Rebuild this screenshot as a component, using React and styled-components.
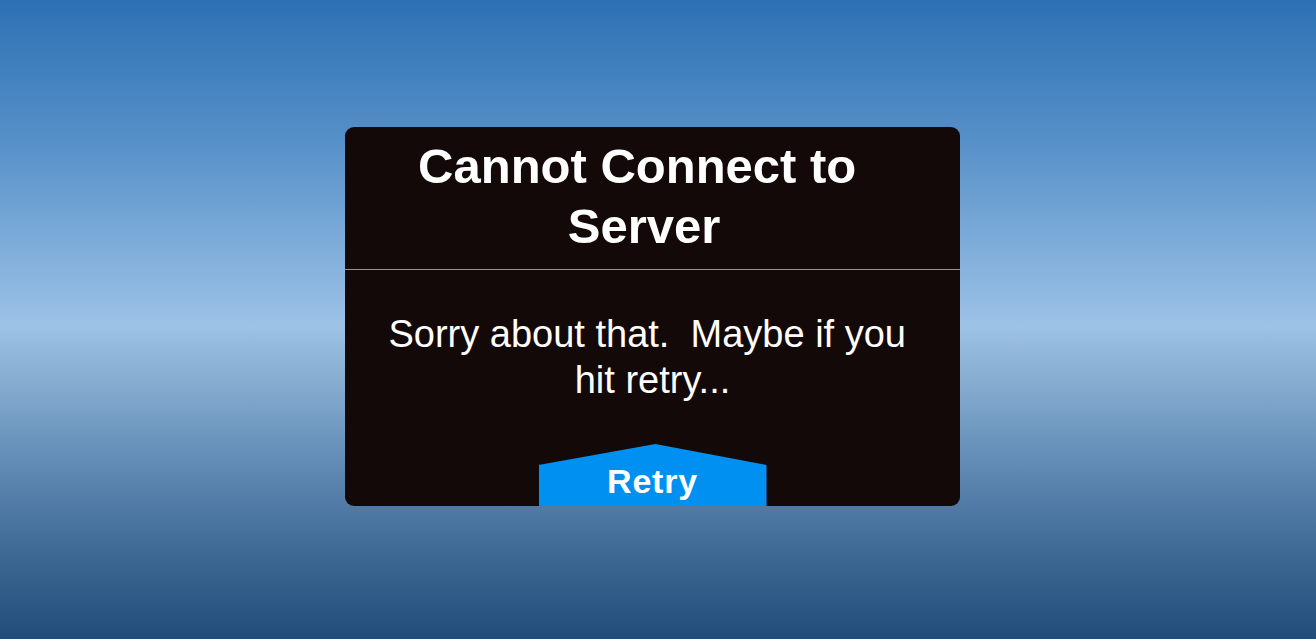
import React from "react";
import styled, { createGlobalStyle } from "styled-components";

const GlobalStyle = createGlobalStyle`
  html, body {
    margin: 0;
    padding: 0;
  }
  body {
    font-family: "Liberation Sans", Arial, sans-serif;
  }
`;

const Page = styled.div`
  width: 100vw;
  height: 100vh;
  box-sizing: border-box;
  display: flex;
  align-items: center;
  justify-content: center;
  padding: 0 11px 6px 0;
  background: linear-gradient(
    180deg,
    #2d71b4 0%,
    #5690c8 22%,
    #9dc2e6 51%,
    #86accf 60%,
    #6892ba 70%,
    #456f9b 84%,
    #214b78 100%
  );
`;

const Dialog = styled.div`
  width: 615px;
  height: 379px;
  background: #140909;
  border-radius: 9px;
  overflow: hidden;
  display: flex;
  flex-direction: column;
  color: #fff;
`;

const Header = styled.div`
  padding: 9px 36px 13px 19px;
  border-bottom: 1px solid #9b9391;
`;

const Title = styled.h1`
  margin: 0;
  font-size: 49px;
  line-height: 60px;
  font-weight: 700;
  text-align: center;
  white-space: break-spaces;
`;

const Body = styled.div`
  flex: 1;
  display: flex;
  flex-direction: column;
  align-items: center;
  padding-top: 41px;
`;

const Message = styled.p`
  margin: 0;
  padding: 0 36px;
  font-size: 38px;
  line-height: 46px;
  text-align: center;
  white-space: break-spaces;
`;

const RetryButton = styled.button`
  margin-top: auto;
  width: 228px;
  height: 62px;
  padding: 20px 0 8px;
  border: none;
  background: #0090f2;
  color: #fff;
  font-family: "Liberation Sans", Arial, sans-serif;
  font-size: 34px;
  line-height: 34px;
  font-weight: 700;
  letter-spacing: 0.8px;
  clip-path: polygon(0 21px, 51.3% 0, 100% 21px, 100% 100%, 0 100%);
  cursor: pointer;
`;

export default function App() {
  return (
    <>
      <GlobalStyle />
      <Page>
        <Dialog>
          <Header>
            <Title>Cannot Connect to Server</Title>
          </Header>
          <Body>
            <Message>{"Sorry about that.  Maybe if you hit retry..."}</Message>
            <RetryButton>Retry</RetryButton>
          </Body>
        </Dialog>
      </Page>
    </>
  );
}
